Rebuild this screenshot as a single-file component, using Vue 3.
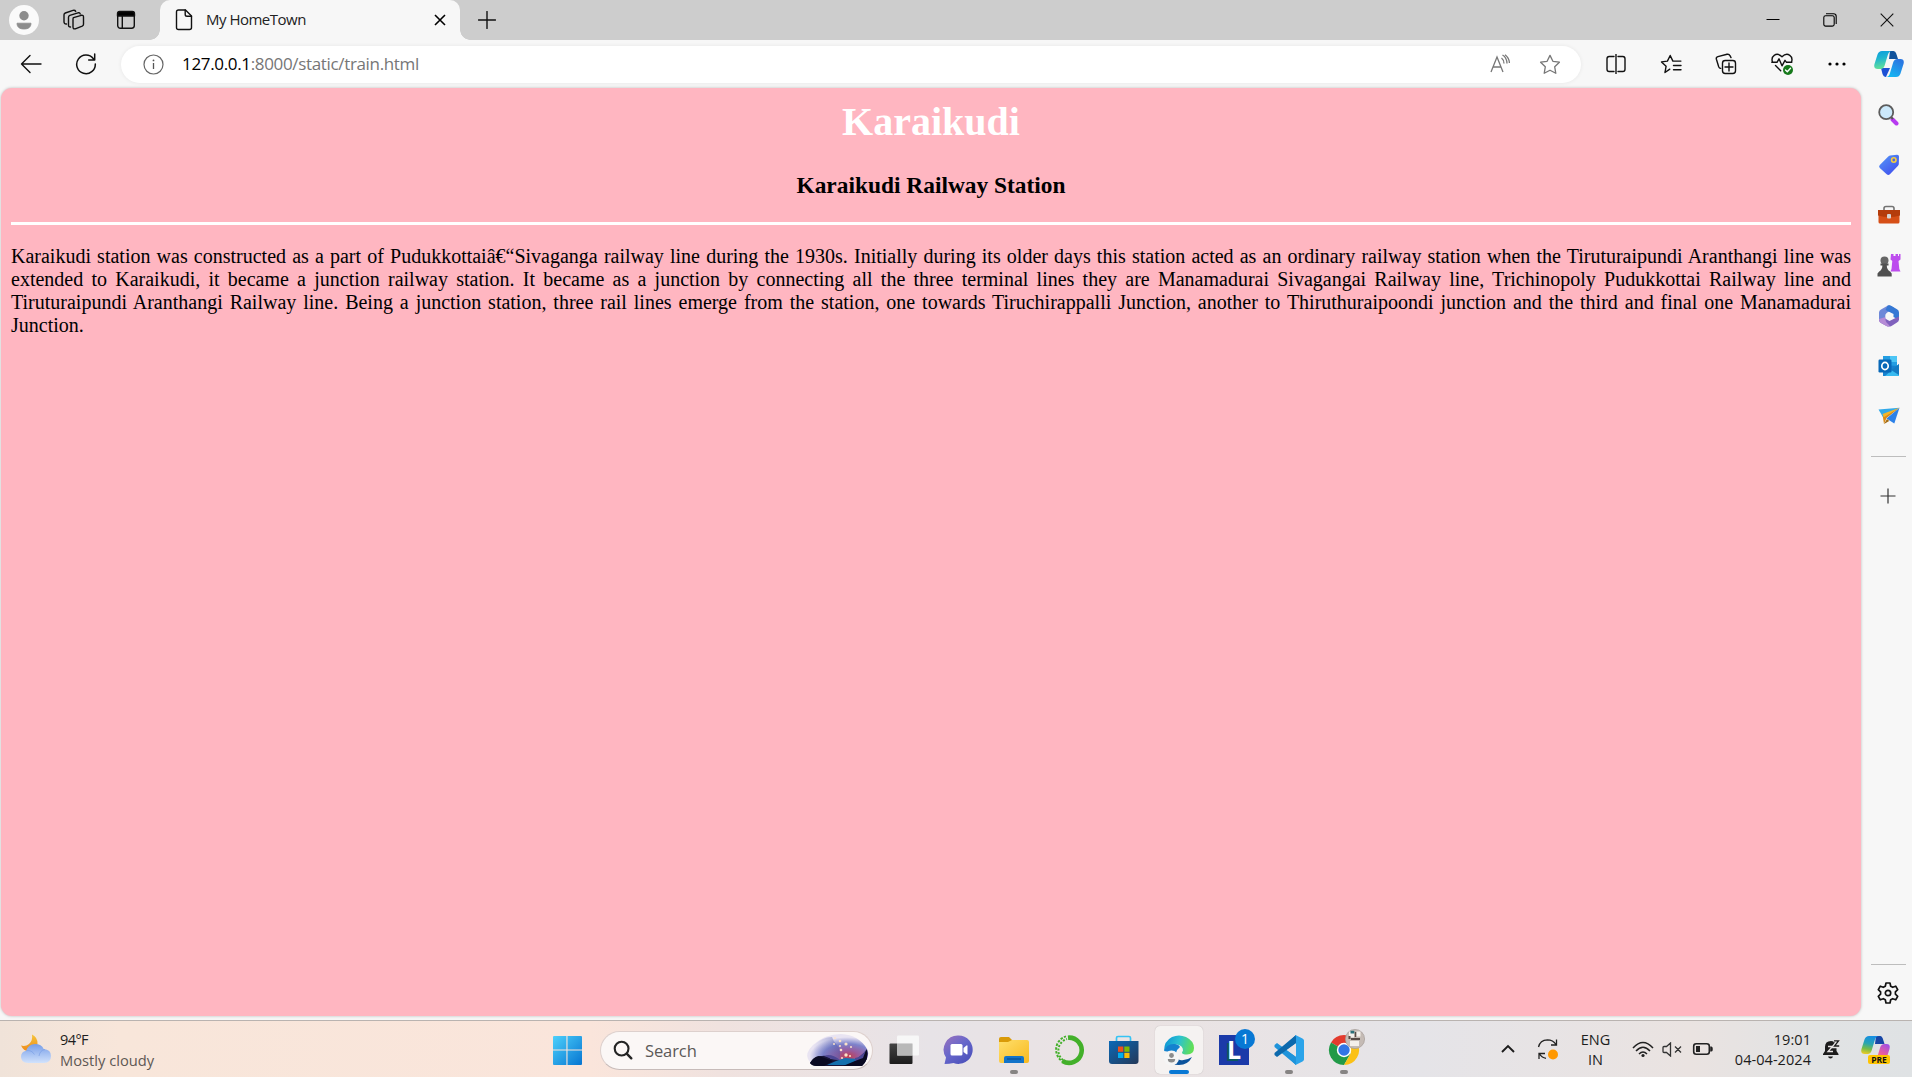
<script setup>
const paragraph =
  'Karaikudi station was constructed as a part of Pudukkottaiâ€“Sivaganga railway line during the 1930s. Initially during its older days this station acted as an ordinary railway station when the Tiruturaipundi Aranthangi line was extended to Karaikudi, it became a junction railway station. It became as a junction by connecting all the three terminal lines they are Manamadurai Sivagangai Railway line, Trichinopoly Pudukkottai Railway line and Tiruturaipundi Aranthangi Railway line. Being a junction station, three rail lines emerge from the station, one towards Tiruchirappalli Junction, another to Thiruthuraipoondi junction and the third and final one Manamadurai Junction.'
</script>

<template>
  <div class="screen">
    <header class="tabstrip">
      <div class="avatar">
        <svg width="30" height="30" viewBox="0 0 30 30"><circle cx="15" cy="15" r="15" fill="#fafafa"/><circle cx="15" cy="10.800" r="4.700" fill="#8d8d8d"/><path d="M8 18.200h14c0 4-2.600 5.800-7 5.800s-7-1.800-7-5.800z" fill="#8d8d8d" stroke="#8d8d8d" stroke-width=".8" stroke-linejoin="round"/></svg>
      </div>
      <svg class="workspaces line" width="22" height="22" viewBox="0 0 22 22">
        <path d="M10.500 8.600l7.800-2.300q2.200-.4 2.200 1.700v7.200q0 1.300-1.300 1.900l-6.900 2.700q-2.300.6-2.300-1.700V10.200q0-1.200.5-1.600z"/>
        <path d="M7.500 18q-2 .1-2-2.100V8.200q0-1.300 1.300-1.800l8.200-2.600q2-.3 2.200 1.200"/>
        <path d="M3.500 15Q1 15.200 1 12.700V5.800Q1 4.500 2.300 4L10 1.400q2-.4 2.700 1"/>
      </svg>
      <svg class="tabactions line" width="20" height="20" viewBox="0 0 20 20"><rect x="1.700" y="1.700" width="16.600" height="16.600" rx="2.700"/><path d="M1.500 6V3.700Q1.500 1.500 3.700 1.500h12.600q2.200 0 2.200 2.200V6z" fill="#000"/><path d="M6.300 6v12"/></svg>
      <div class="tab">
        <svg class="file line" width="18" height="22" viewBox="0 0 18 22"><path d="M3.500 1h7l6 6v11.500q0 2-2 2h-11q-2 0-2-2V3q0-2 2-2z"/><path d="M10.200 1v4.500q0 1.800 1.800 1.800h4.500"/></svg>
        <span class="tab-title">My HomeTown</span>
        <svg class="tab-close" width="12" height="12" viewBox="0 0 12 12"><path d="M1 1l10 10M11 1L1 11" stroke="#000" stroke-width="1.600"/></svg>
      </div>
      <svg class="newtab line" width="18" height="18" viewBox="0 0 18 18"><path d="M9 .5v17M.5 9h17"/></svg>
      <div class="winctl">
        <svg width="14" height="14" viewBox="0 0 14 14"><path d="M.5 6.500h13" stroke="#000"/></svg>
        <svg width="14" height="14" viewBox="0 0 14 14" fill="none" stroke="#000" stroke-width="1.100"><rect x=".8" y="2.700" width="10.400" height="10.400" rx="1.800"/><path d="M3 .7h7.500q2.700 0 2.700 2.700V11"/></svg>
        <svg width="14" height="14" viewBox="0 0 14 14"><path d="M.7.700l12.600 12.600M13.300.700L.7 13.300" stroke="#111" stroke-width="1.100"/></svg>
      </div>
    </header>

    <div class="toolbar">
      <svg class="back line" width="22" height="20" viewBox="0 0 22 20"><path d="M21 10H1.500M10 1.500L1.500 10l8.500 8.500"/></svg>
      <svg class="reload line" width="22" height="22" viewBox="0 0 22 22"><path d="M18.400 5.700A9.300 9.300 0 1 0 20.300 11M19.700 1v6h-6" stroke-width="1.500"/></svg>
      <div class="address">
        <svg class="info" width="21" height="21" viewBox="0 0 21 21"><circle cx="10.500" cy="10.500" r="9.500" fill="none" stroke="#666" stroke-width="1.200"/><path d="M10.500 9v6" stroke="#555" stroke-width="1.300"/><circle cx="10.500" cy="6.400" r=".9" fill="#555"/></svg>
        <span class="url"><b>127.0.0.1</b>:8000/static/train.html</span>
        <svg class="read" width="20" height="20" viewBox="0 0 20 20" fill="none" stroke="#777" stroke-width="1.300"><path d="M1 18L7 3l6 15M3 13h8M11.500 4q2.300 1.700 2.500 5.500M12.500 1q4.300 2.500 4.500 8.500"/><path d="M15 .8Q19.200 4 19.400 9"/></svg>
        <svg class="fav" width="22" height="21" viewBox="0 0 22 21"><path d="M11 1.400l2.900 5.900 6.500.9-4.700 4.600 1.100 6.500L11 16.200l-5.800 3.100 1.100-6.500L1.600 8.200l6.500-.9z" fill="none" stroke="#777" stroke-width="1.300" stroke-linejoin="round"/></svg>
      </div>
      <div class="tools">
        <svg class="line" width="20" height="20" viewBox="0 0 20 20"><path d="M8 2.500H3.200Q1 2.500 1 4.700v10.600q0 2.200 2.200 2.200H8M12 2.500h4.800Q19 2.500 19 4.700v10.600q0 2.200-2.200 2.200H12M10 .3v19.400"/></svg>
        <svg class="line" width="22" height="20" viewBox="0 0 22 20"><path d="M9.800 15.200L5 18.500l1.100-6.300-4.600-4.300 5.900-.8L10.200 1.500l2.700 5.600h8M13.500 11.500H21M13.500 15.700H21"/></svg>
        <svg class="line" width="22" height="22" viewBox="0 0 22 22"><rect x="7.500" y="7.500" width="13" height="13" rx="2.700"/><path d="M14 10v8M10 14h8M16 4.600L15 2.700Q14.100.8 12 1.300L2.900 3.600Q.8 4.200 1.400 6.300l2.300 7.400q.6 1.500 2 1.700"/></svg>
        <svg class="line" width="22" height="22" viewBox="0 0 22 22"><path d="M1.500 9.200Q0 4.500 3.200 2.300 7-.2 11 3.800q4-4 7.800-1.500 3.200 2.200 1.700 6.900M.8 9.300H6l2-3.500 3 7 3-5.500 1.500 2h5.300M4.500 12.600l5.200 5.200"/><circle cx="17" cy="17" r="5" fill="#16791b" stroke="none"/><path d="M14.500 17l1.800 1.800 3.200-3.500" stroke="#fff"/></svg>
        <svg width="18" height="4" viewBox="0 0 18 4"><circle cx="2" cy="2" r="1.600"/><circle cx="9" cy="2" r="1.600"/><circle cx="16" cy="2" r="1.600"/></svg>
      </div>
      <svg class="copilot" width="30" height="28" viewBox="0 0 30 28">
        <defs>
          <linearGradient id="ca" x1="0" y1="0" x2=".2" y2="1"><stop offset="0" stop-color="#0a9dde"/><stop offset=".45" stop-color="#20b5cf"/><stop offset="1" stop-color="#62e09a"/></linearGradient>
          <linearGradient id="cb" x1=".6" y1="0" x2="0" y2="1"><stop offset="0" stop-color="#2a78e2"/><stop offset="1" stop-color="#12c0f5"/></linearGradient>
        </defs>
        <path d="M16 1h3.500q2 0 2.700 2.500L24 9h-9z" fill="#10529b"/>
        <path d="M7 18h9l-4 9q-2.500 0-3.500-3z" fill="#1c50d5"/>
        <path d="M8 1h10q-3 0-4.200 4l-3 10q-1 4-4.200 4H3.800Q-.8 19 .5 14l3-9.500Q4.700 1 8 1z" fill="url(#ca)"/>
        <path d="M22 27H12q3 0 4-4l3-10q1-4 4.500-4h3q4.300 0 3 5l-3 9.500Q25.300 27 22 27z" fill="url(#cb)"/>
      </svg>
    </div>

    <div class="body">
      <main class="page">
        <h1>Karaikudi</h1>
        <h3>Karaikudi Railway Station</h3>
        <hr>
        <p>{{ paragraph }}</p>
      </main>
      <aside class="sidebar">
        <div class="apps">
          <svg width="22" height="22" viewBox="0 0 22 22"><path d="M14.500 15.500l4 4" stroke="#b73af0" stroke-width="4" stroke-linecap="round"/><path d="M12 12l3 3" stroke="#555" stroke-width="2"/><circle cx="8.200" cy="8.200" r="7" fill="#cce9fb" stroke="#5c5c5c" stroke-width="1.800"/></svg>
          <svg width="22" height="22" viewBox="0 0 22 22"><defs><linearGradient id="tg" x1="0" y1="0" x2=".8" y2="1"><stop stop-color="#559af8"/><stop offset="1" stop-color="#404ded"/></linearGradient></defs><path d="M12 1.600l7-.8q2-.1 2 1.800l-.2 7.400q0 1.200-1 2.100l-7.900 8.200q-1.600 1.500-3.200 0L1.800 14q-1.400-1.600 0-3L10 2.700q.8-.9 2-1.100z" fill="url(#tg)"/><circle cx="15.800" cy="6" r="2.200" fill="#5965d9" stroke="#f6ce3c" stroke-width="1.600"/></svg>
          <svg width="24" height="20" viewBox="0 0 24 20"><path d="M7 6V3.500Q7 1.500 9 1.500h6q2 0 2 2V6" fill="none" stroke="#737373" stroke-width="1.600"/><rect x="1.500" y="9" width="21" height="9.500" rx="1.500" fill="#d64f17"/><path d="M1 5h22v5.500q-11 3-22 0z" fill="#b43c0c"/><rect x="10" y="9" width="4" height="4.500" rx="1" fill="#d5d5d5"/></svg>
          <svg width="24" height="24" viewBox="0 0 24 24"><path d="M14 1h2.500v2h2V1h2.500v2h1V1h1.500v5.500l-2 1.500.8 8 1.200 2.500h-10L14.500 16l.8-8-1.800-1.500z" fill="#bd4dee"/><circle cx="7.500" cy="7.500" r="4" fill="#666"/><path d="M3.500 10.500h8v2H9.800q0 4 3.200 6l1.700 2v3H.5v-3l1.700-2q3.200-2 3.200-6H3.500z" fill="#505050"/></svg>
          <svg width="22" height="24" viewBox="0 0 22 24">
            <path d="M10 1.500Q11 1 13 2l4 2.400-6.500 3.300Q7.500 9 7.500 12v5L3 18.500Q1 17.500 1 15V8.500Q1 6.500 3 5.500z" fill="#6e88d8"/>
            <path d="M9.500 1.700q2-1 4 .3l5.500 3.200q2 1.100 2 3.300v7.500l-5.500-3V10L7.500 6z" fill="#3578d4"/>
            <path d="M21 12.500v3q0 2-2 3l-5.500 3.500q-2.500 1.200-5 0L3 19q-1.700-1-2-3l7-1 3.500 2 5-2.500z" fill="#8061bd"/>
            <path d="M1 15l6.500-2v3q0 2 4 5.500-1 1.500-3 .5L3 19q-2-1-2-4z" fill="#b58bd6"/>
            <path d="M11 8.200l3.400 2v3.900L11 16l-3.400-1.900v-3.900z" fill="#f7f7f7"/>
          </svg>
          <svg width="22" height="22" viewBox="0 0 22 22"><path d="M5 1h14v11H5z" fill="#249ee2"/><path d="M12 1h7v6h-7z" fill="#4cc5f5"/><path d="M5 10l16 1v10H5z" fill="#1681cf"/><path d="M21 9v12H7l7-6z" fill="#38baf0"/><path d="M13 15l8 5V9z" fill="#147bc3"/><rect x=".5" y="4.500" width="13" height="13" rx="1.200" fill="#0868b8"/><ellipse cx="7" cy="11" rx="3.200" ry="3.600" fill="none" stroke="#fff" stroke-width="1.700"/></svg>
          <svg width="22" height="18" viewBox="0 0 22 18"><path d="M.5 2.500L21.500.8 5 10.300z" fill="#31a9e9"/><path d="M21.500.8L8.500 11 6 17 4.800 9.500z" fill="#d98a15"/><path d="M21.500.8L16.300 16.500 8.500 11.500z" fill="#2c81e8"/><path d="M21.500.8L4.500 7l1.300 3.200z" fill="#f3b52a"/><path d="M6 17l3-5 2.200 2z" fill="#a26a10"/></svg>
        </div>
        <div class="rule"></div>
        <svg class="add" width="16" height="16" viewBox="0 0 16 16"><path d="M8 .5v15M.5 8h15" stroke="#333" stroke-width="1.200"/></svg>
        <div class="rule bottom"></div>
        <svg class="gear line" width="22" height="22" viewBox="0 0 22 22"><path d="M9 1h4l.7 3.200 2 1.100 3-1.100 2 3.500-2.300 2.100v2.400l2.300 2.100-2 3.500-3-1.100-2 1.100L13 21H9l-.7-3.200-2-1.100-3 1.100-2-3.500 2.300-2.100V9.800L1.300 7.700l2-3.500 3 1.100 2-1.100z" stroke-width="1.700"/><circle cx="11" cy="11" r="2.700" stroke-width="1.700"/></svg>
      </aside>
    </div>

    <footer class="taskbar">
      <div class="weather">
        <svg width="32" height="32" viewBox="0 0 32 32"><defs><linearGradient id="mo" x1="0" y1="0" x2="0" y2="1"><stop stop-color="#f5c53a"/><stop offset="1" stop-color="#ee8a1c"/></linearGradient><linearGradient id="cl" x1="0" y1="0" x2="0" y2="1"><stop stop-color="#769de8"/><stop offset="1" stop-color="#d1e2fc"/></linearGradient></defs><path d="M12 1.500q6 3 5.500 9.500-1.500 6.500-9 7Q3.500 18 1 12.500q4.500 1.300 8-1.500 4-3.500 3-9.500z" fill="url(#mo)"/><path d="M8 30Q1 29.500 1 23.700q0-5 5.200-6Q8.500 11 15 11t8.700 5Q31 16.500 31 23q0 6.500-7 7z" fill="url(#cl)"/><path d="M6.200 17.700q5.500-1 8.200 3.800M19 23q1-6 6-6.500" stroke="#749be4" fill="none" opacity=".6"/></svg>
        <div class="weather-text"><span>94°F</span><small>Mostly cloudy</small></div>
      </div>
      <svg class="start" width="30" height="30" viewBox="0 0 30 30"><defs><linearGradient id="wn" x1="0" y1="0" x2="1" y2="1"><stop stop-color="#4dd0fb"/><stop offset="1" stop-color="#0675d1"/></linearGradient></defs><path d="M1 2q0-1 1-1h12.400v13.500H1zM15.500 1H29q1 0 1 1v12.500H15.500zM1 15.600h13.400V30H2q-1 0-1-1zM15.500 15.600H30V29q0 1-1 1H15.500z" fill="url(#wn)"/></svg>
      <div class="search">
        <svg width="20" height="20" viewBox="0 0 20 20" fill="none" stroke="#242424"><circle cx="8.600" cy="8.600" r="6.900" stroke-width="2.100"/><path d="M13.700 13.700l4.600 4.600" stroke-width="2.400" stroke-linecap="round"/></svg>
        <span>Search</span>
        <svg class="art" width="66" height="36" viewBox="0 0 66 36">
          <defs>
            <radialGradient id="ar" cx=".66" cy=".72" r=".62"><stop stop-color="#c23f4e"/><stop offset=".3" stop-color="#9a5a9c"/><stop offset=".65" stop-color="#7d83cb"/><stop offset="1" stop-color="#e9e4f2"/></radialGradient>
            <linearGradient id="as" x1="0" y1="0" x2="1" y2="0"><stop stop-color="#7d8ace" stop-opacity="0"/><stop offset="1" stop-color="#525ba9"/></linearGradient>
          </defs>
          <path d="M3 27Q0 21 8 13 20 2 36 2q18 1 26 15 4 8-5 16H12Q5 32 3 27z" fill="url(#ar)"/>
          <path d="M8 14Q17 5 27 5q1 4 5 8 5 5 2 16H12z" fill="url(#as)" opacity=".55"/>
          <path d="M5 31q6-8 12-7 5-1 9 3 9 1 17 2 12-1 19-12 2 11-5 17H12q-5 0-7-3z" fill="#17163a"/>
          <path d="M22 33l9-4 9-3 13 1-8 6z" fill="#1470ad"/>
          <path d="M5 31q3-6 9-7l14 5-9 5h-7q-5 0-7-3zM62 18q2 9-5 16H38l12-5z" fill="#0a0a22"/>
          <path d="M19 24q7-3 16 4l-8-1zM50 26q6-1 11-8l-3 8-8 3z" fill="#4d4795"/>
          <g fill="#fbe2c8"><circle cx="30" cy="6" r="1"/><circle cx="35" cy="9" r="1.300"/><circle cx="29" cy="12" r="1"/><circle cx="35" cy="14" r="1"/><circle cx="41" cy="12" r="1.600"/><circle cx="46" cy="15" r="1"/><circle cx="36" cy="18" r="1.300"/><circle cx="41" cy="23" r="1.700"/><circle cx="37" cy="26" r="1"/><circle cx="45" cy="24" r="1"/></g>
        </svg>
      </div>
      <nav class="pinned">
        <div class="pin"><svg width="32" height="32" viewBox="0 0 32 32"><defs><linearGradient id="tv" x1="0" y1="0" x2="0" y2="1"><stop stop-color="#444"/><stop offset="1" stop-color="#1c1c1c"/></linearGradient></defs><rect x="1.500" y="9.500" width="23" height="20.500" rx="1" fill="url(#tv)"/><rect x="9" y="1.500" width="22" height="20" rx="1" fill="#f8f8f8" opacity=".9"/><path d="M9 9.500h15.500v12H9z" fill="#b8b8b8"/></svg></div>
        <div class="pin"><svg width="32" height="32" viewBox="0 0 32 32"><defs><linearGradient id="ch" x1="0" y1="0" x2=".8" y2="1"><stop stop-color="#9c72bd"/><stop offset=".5" stop-color="#6767cb"/><stop offset="1" stop-color="#4a4fba"/></linearGradient></defs><path d="M15.500 1.500a14.200 14.200 0 1 1-5 27.500q-4 1-9 1l1.500-6.500A14.200 14.200 0 0 1 15.500 1.500z" fill="url(#ch)"/><rect x="7.500" y="10" width="12" height="11.500" rx="1.500" fill="#fff"/><path d="M20.500 14l3-2.500q1-.5 1 .7v7.600q0 1.200-1 .5l-3-2.300z" fill="#fff"/></svg></div>
        <div class="pin"><svg width="32" height="32" viewBox="0 0 32 32"><defs><linearGradient id="fo" x1="0" y1="0" x2="1" y2="1"><stop stop-color="#ffdf6c"/><stop offset="1" stop-color="#f8b91e"/></linearGradient></defs><path d="M1 5q0-2 2-2h8l3 3v5H1z" fill="#d99a08"/><path d="M1 8h9l4-2h15q2 0 2 2v19q0 2-2 2H3q-2 0-2-2z" fill="url(#fo)"/><path d="M6 29v-5q0-2 2-2h16q2 0 2 2v5z" fill="#1374c9"/><path d="M9 25h14" stroke="#0b559b" stroke-width="1.500"/></svg><i class="dot"></i></div>
        <div class="pin"><svg width="32" height="32" viewBox="0 0 32 32" fill="none"><path d="M15 3.700a12.600 12.600 0 1 1-5.500 23.300" stroke="#43b02a" stroke-width="4.600"/><path d="M11 28.300A14 14 0 0 1 13 2.300" stroke="#43b02a" stroke-width="1.900" stroke-dasharray="2.500 1.400"/><path d="M10 26A12 12 0 0 1 14 5" stroke="#43b02a" stroke-width="2" stroke-dasharray="2 1.600"/></svg></div>
        <div class="pin"><svg width="32" height="32" viewBox="0 0 32 32"><defs><linearGradient id="st" x1="0" y1="0" x2="1" y2="1"><stop stop-color="#0b69b7"/><stop offset="1" stop-color="#243858"/></linearGradient></defs><path d="M8.500 8V4q0-1.500 1.500-1.500h11q1.500 0 1.500 1.500v4" fill="none" stroke="#36c3f4" stroke-width="1.700"/><path d="M1 7h29.500V27q0 3-3 3H4q-3 0-3-3z" fill="url(#st)"/><path d="M10 12.500h5.300v5.300H10z" fill="#f1511b"/><path d="M16.300 12.500h5.200v5.300h-5.200z" fill="#80ba01"/><path d="M10 18.800h5.300v5.200H10z" fill="#00adef"/><path d="M16.300 18.800h5.200v5.200h-5.200z" fill="#fbbc09"/></svg></div>
        <div class="pin active"><svg width="32" height="32" viewBox="0 0 32 32"><defs><linearGradient id="ed" x1="0" y1=".2" x2="1" y2=".4"><stop stop-color="#0b91d6"/><stop offset=".5" stop-color="#2bc2d0"/><stop offset="1" stop-color="#61df55"/></linearGradient></defs><path d="M1 17Q1 7 9 3q7-3 14 0 8 4 8 11 0 6-7 6.500-5 0-5-2l1-2q0-5-6-6Q5 10 1 17z" fill="url(#ed)"/><path d="M1 17q3-8 11-7 4 .5 5 3-3 2-4 6z" fill="#1482cf"/><path d="M11 17q-1 7 6 9 6 1 12-3-4 8-13 8Q7 31 4 25q2-7 7-8z" fill="#0b539c"/><circle cx="8.500" cy="24" r="7.500" fill="#f5f5f5"/><circle cx="8.500" cy="21.500" r="2.400" fill="#8b8b8b"/><path d="M4.800 25h7.400q0 3.500-3.700 3.500T4.800 25z" fill="#8b8b8b"/></svg><i class="bar"></i></div>
        <div class="pin"><div class="lapp">L</div><em class="count">1</em></div>
        <div class="pin"><svg width="32" height="32" viewBox="0 0 32 32"><path d="M23 1L7 16l16 15v-8L13 16l10-7z" fill="#1480c7"/><path d="M1.500 11L4 9l19 14v8L1.500 13z" fill="#1f94db"/><path d="M1.500 21L4 23 23 9V1L1.500 19z" fill="#0c69ad"/><path d="M22.500 1l7 3.500q1.500.8 1.500 2v19q0 1.200-1.500 2l-7 3.500q-1 0 .5-2V3q-1.500-2-.5-2z" fill="#2ba4ea"/></svg><i class="dot"></i></div>
        <div class="pin"><svg width="32" height="32" viewBox="0 0 32 32"><path d="M16 16L3 8.500A15 15 0 0 1 29 8.500z" fill="#e33b2e"/><path d="M3 8.500A15 15 0 0 0 16 31l6.500-11.200L16 16z" fill="#229a48"/><path d="M29 8.500A15 15 0 0 1 16 31l6.500-11.200V8.500z" fill="#fbc116"/><circle cx="16" cy="16" r="7.200" fill="#fff"/><circle cx="16" cy="16" r="5.700" fill="#3275e5"/></svg>
          <svg class="photo" width="20" height="20" viewBox="0 0 20 20"><circle cx="10" cy="10" r="9.600" fill="#c5bbb5" stroke="#a39b97" stroke-width=".7"/><path d="M4 2.500h5v6H4zM11.500 2.500h4v5h-4zM5 12h9v5H5z" fill="#f4efea"/><path d="M5.500 1.800h3.800v2.700H5.500z" fill="#2c6f78"/><path d="M6 9h9v2H6zM3.500 7h2v3h-2zM9.800 3h1.400v5H9.800z" fill="#574a45"/></svg><i class="dot"></i></div>
      </nav>
      <div class="tray">
        <svg class="chev" width="16" height="10" viewBox="0 0 16 10"><path d="M2 8l6-6 6 6" fill="none" stroke="#1c1c1c" stroke-width="1.900"/></svg>
        <svg class="sync" width="22" height="22" viewBox="0 0 22 22"><path d="M1.500 9Q3 2 10.500 1.800q5.500 0 8.500 4.700M19.500 1.500v5.500H14M9 20.300q-4-.5-6.500-4.300M2 21v-5.500h6" fill="none" stroke="#222" stroke-width="1.300"/><circle cx="16" cy="16.500" r="5" fill="#ff9800"/></svg>
        <div class="lang"><span>ENG</span><span>IN</span></div>
        <svg class="wifi" width="22" height="17" viewBox="0 0 22 17" fill="none" stroke="#222" stroke-width="1.500"><path d="M1 7Q11-4 21 7M4 10q7-7.500 14 0M7 13q4-4 8 0"/><circle cx="11" cy="14.500" r="1.600" fill="#222" stroke="none"/></svg>
        <svg class="vol" width="21" height="15" viewBox="0 0 21 15" fill="none" stroke="#333" stroke-width="1.300"><path d="M1 5.500q0-1 1-1h2.500L8.500 1v13l-4-3.500H2q-1 0-1-1zM13 4.500l6 6M19 4.500l-6 6"/></svg>
        <svg class="batt" width="22" height="14" viewBox="0 0 22 14"><rect x="1.700" y="1.700" width="15.600" height="10.600" rx="2.500" fill="none" stroke="#222" stroke-width="1.600"/><path d="M4 4h4v6H4zM18.200 4.500h1.300q1.300 0 1.300 2.500t-1.300 2.500h-1.300z" fill="#222"/></svg>
        <div class="clock"><span>19:01</span><span>04-04-2024</span></div>
        <svg class="bell" width="19" height="20" viewBox="0 0 19 20"><path d="M9 2Q3 2 3 8v4l-2 3v1h15.500v-1l-2-3V4Q12 2 9 2z" fill="#1c1c1c"/><path d="M6 17.500h5q-.5 2-2.500 2T6 17.500z" fill="#1c1c1c"/><path d="M6 7.500h4.500L6 12.500h5" fill="none" stroke="#e7e4e4" stroke-width="1.300"/><path d="M11.500 1.500h5L12 7.500h5.500" fill="none" stroke="#e4e2e2" stroke-width="3.600"/><path d="M12 1.800h4.500L12.500 7h4.700" fill="none" stroke="#1c1c1c" stroke-width="1.300"/></svg>
        <div class="pre">
          <svg width="30" height="28" viewBox="0 0 30 28"><defs><linearGradient id="pa" x1=".4" y1="0" x2=".2" y2="1"><stop stop-color="#168fe2"/><stop offset=".4" stop-color="#28a5b2"/><stop offset=".7" stop-color="#75bc48"/><stop offset="1" stop-color="#f1cb25"/></linearGradient><linearGradient id="pb" x1=".8" y1="0" x2=".2" y2="1"><stop stop-color="#a250e2"/><stop offset=".5" stop-color="#ea5d9d"/><stop offset="1" stop-color="#ff9b64"/></linearGradient></defs><path d="M15 1h4.500q1.500 0 2.300 2.500L23.500 9H14z" fill="#1746a6"/><path d="M8 1h10q-3 0-4.200 4l-3 10q-1 4-4.200 4H3.800Q-.8 19 .5 14l3-9.500Q4.700 1 8 1z" fill="url(#pa)"/><path d="M22 27H11q4 0 5-4l3-10q1-4 4.500-4h2q4.300 0 3 5l-3 9.500Q24.300 27 22 27z" fill="url(#pb)"/></svg>
          <b>PRE</b>
        </div>
      </div>
    </footer>
  </div>
</template>

<style>
body { margin: 0; overflow: hidden; }
</style>

<style scoped>
.screen {
  width: 1912px;
  height: 1077px;
  display: flex;
  flex-direction: column;
  background: #f7f7f7;
  font-family: "Open Sans", "Noto Sans", sans-serif;
  overflow: hidden;
}
svg { display: block; flex: none; }
.line { fill: none; stroke: #111; stroke-width: 1.4; stroke-linejoin: round; stroke-linecap: round; }

.tabstrip { flex: none; height: 40px; background: #cdcdcd; display: flex; align-items: center; }
.avatar { margin-left: 9px; }
.workspaces { margin-left: 24px; }
.tabactions { margin-left: 31px; }
.tab {
  position: relative;
  width: 300px;
  height: 40px;
  margin-left: 24px;
  box-sizing: border-box;
  padding: 0 14px 0 15px;
  display: flex;
  align-items: center;
  background: #f7f7f7;
  border-radius: 10px 10px 0 0;
}
.tab::before, .tab::after { content: ""; position: absolute; bottom: 0; width: 10px; height: 10px; }
.tab::before { left: -10px; background: radial-gradient(circle at 0 0, #cdcdcd 9.5px, #f7f7f7 10px); }
.tab::after { right: -10px; background: radial-gradient(circle at 100% 0, #cdcdcd 9.5px, #f7f7f7 10px); }
.tab-title { margin: 0 0 2px 13px; font-size: 15px; letter-spacing: -.5px; line-height: 20px; color: #222; white-space: nowrap; }
.tab-close { margin-left: auto; }
.newtab { margin-left: 18px; }
.winctl { margin-left: auto; margin-right: 18px; display: flex; gap: 43px; }

.toolbar { flex: none; height: 48px; display: flex; align-items: center; }
.back { margin-left: 20px; }
.reload { margin-left: 33px; }
.address {
  width: 1460px;
  height: 37px;
  box-sizing: border-box;
  margin-left: 24px;
  padding: 0 20px 0 22px;
  display: flex;
  align-items: center;
  background: #fff;
  border-radius: 19px;
  box-shadow: 0 0 4px rgba(0, 0, 0, .07);
}
.url { margin: 0 0 2px 18px; font-size: 17px; letter-spacing: -.34px; color: #767676; white-space: nowrap; }
.url b { font-weight: 400; color: #000; }
.read { margin-left: auto; }
.fav { margin-left: 29px; }
.tools { margin-left: 7px; width: 277px; display: grid; grid-template-columns: repeat(5, 1fr); justify-items: center; align-items: center; }
.copilot { margin-left: 9px; }

.body { flex: none; height: 932px; display: flex; }
.page {
  width: 1860px;
  height: 928px;
  margin-left: 1px;
  box-sizing: border-box;
  padding: 11px 10px 0;
  background: #ffb6c1;
  border-radius: 11px;
  box-shadow: 0 0 3px rgba(0, 0, 0, .25);
  font: 20px "Liberation Serif", "Times New Roman", serif;
  color: #000;
}
h1 { margin: 0; font-size: 40px; line-height: 46px; text-align: center; color: #fff; }
h3 { margin: 27px 0 0; font-size: 23.4px; line-height: 27px; text-align: center; }
hr { margin: 22.500px 0 0; border: 0; height: 3px; background: #fff; }
p { margin: 20.500px 0 0; line-height: 23px; text-align: justify; }

.sidebar { width: 51px; height: 932px; padding-left: 3px; box-sizing: border-box; display: flex; flex-direction: column; align-items: center; }
.apps { height: 351px; width: 49px; padding-top: 2px; margin-left: 1px; box-sizing: border-box; display: grid; grid-template-rows: repeat(7, 50.143px); place-items: center; }
.rule { flex: none; width: 35px; height: 1px; margin-top: 17px; background: #bdbdbd; }
.add { margin-top: 31px; }
.bottom { margin-top: auto; }
.gear { margin: 17px 0 16px; }

.taskbar {
  flex: none;
  height: 57px;
  box-sizing: border-box;
  border-top: 1px solid #b9b3b0;
  display: flex;
  align-items: center;
  background: linear-gradient(90deg, #f0e3d9 0, #f8e6da 120px, #fae5db 590px, #f0e2df 720px, #e7e3e7 930px, #ebe3e3 1130px, #e5e4e8 1420px, #eae3e1 1690px, #e1e3e4 1820px, #dfe2e4 1912px);
  color: #1d1d1d;
}
.weather { width: 532px; padding-left: 20px; display: flex; align-items: center; }
.weather-text { margin: 2px 0 0 8px; display: flex; flex-direction: column; font-size: 14.500px; line-height: 20px; }
.weather-text span { letter-spacing: -.6px; }
.weather-text small { font-size: 14.700px; color: #5e5854; }
.start { margin-top: 2px; }
.search {
  width: 273px;
  height: 39px;
  box-sizing: border-box;
  margin: 2px 0 0 18px;
  padding: 0 1px 0 12px;
  border: 1px solid #ddd0cd;
  border-bottom-color: #c7bbb9;
  border-radius: 20px;
  display: flex;
  align-items: center;
  background: #fbf7f6;
  font-size: 16.500px;
  letter-spacing: -.1px;
  color: #5c5958;
}
.search span { margin-left: 12px; }
.art { margin-left: auto; }
.pinned { margin-left: 7px; display: flex; gap: 7px; }
.pin { position: relative; width: 48px; height: 48px; display: flex; align-items: center; justify-content: center; border-radius: 5px; margin-top: 1px; }
.active { background: #f5f2f1; box-shadow: 0 0 1px rgba(0, 0, 0, .25); }
.dot, .bar { position: absolute; bottom: 0; height: 4px; border-radius: 2px; }
.dot { left: 20px; width: 8px; background: #868483; }
.bar { left: 14px; width: 20px; background: #0878d4; }
.lapp { width: 30px; height: 30px; background: #1b3aa9; color: #fff; font: 700 25px/29px "Open Sans", sans-serif; text-align: center; text-shadow: -2px 2px 0 #0b5960; }
.count { position: absolute; left: 25px; top: 3px; width: 20px; height: 20px; border-radius: 50%; background: #0878d4; color: #fff; font: 400 14px/20px "Open Sans", sans-serif; text-align: center; }
.photo { position: absolute; left: 25px; top: 3px; }

.tray { margin-left: auto; margin-right: 21px; display: flex; align-items: center; font-size: 14.500px; line-height: 20px; }
.chev { margin-left: 1px; }
.sync { margin-left: 21px; }
.lang { margin: 2px 0 0 20px; width: 33px; display: flex; flex-direction: column; align-items: center; }
.wifi { margin-left: 20px; }
.vol { margin-left: 8px; }
.batt { margin-left: 9px; }
.clock { margin: 1px 0 0 17px; width: 80px; display: flex; flex-direction: column; align-items: flex-end; white-space: nowrap; letter-spacing: .05px; }
.bell { margin-left: 11px; }
.pre { position: relative; margin-left: 20px; }
.pre b { position: absolute; left: 7px; bottom: -1px; width: 22px; height: 9px; border-radius: 2px; background: #ffc400; font: 700 8.500px/9px "Open Sans", sans-serif; text-align: center; color: #111; }
</style>
